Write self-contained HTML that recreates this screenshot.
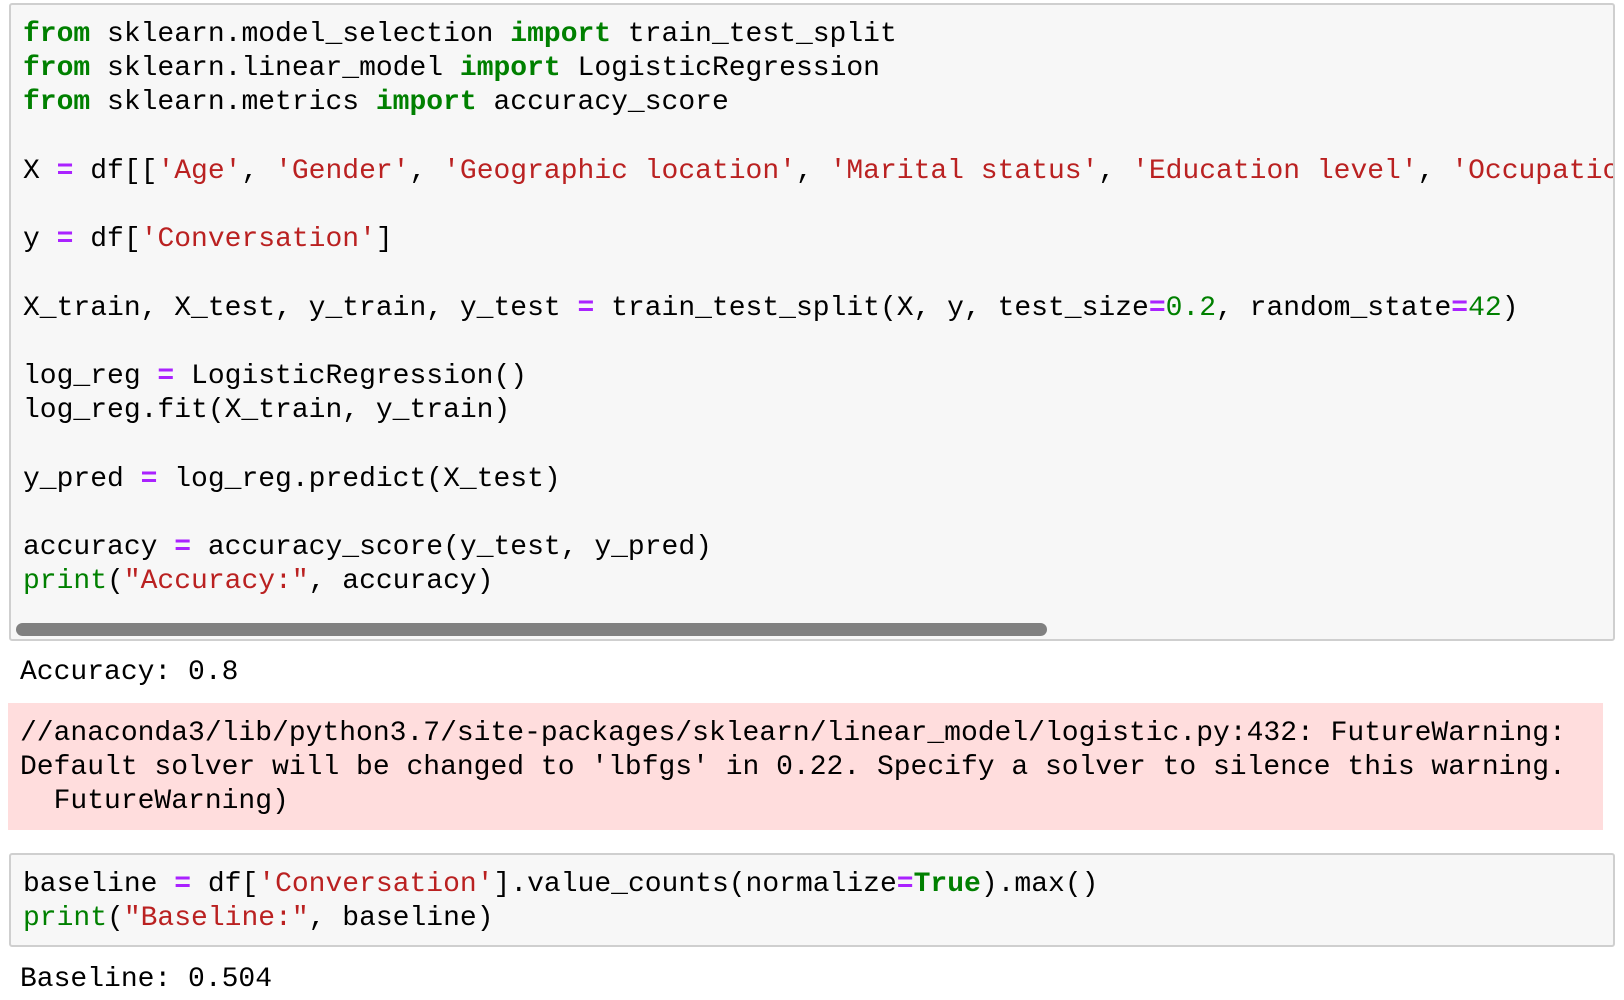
<!DOCTYPE html>
<html><head><meta charset="utf-8"><style>
html,body{margin:0;padding:0;background:#fff;width:1624px;height:1000px;overflow:hidden}
pre{margin:0;font-family:"Liberation Mono","DejaVu Sans Mono",monospace;font-size:28px;line-height:34.2px;color:#000;white-space:pre;position:absolute}
.box{position:absolute;background:#f7f7f7;border:2px solid #cfcfcf;border-radius:3px;box-sizing:border-box;overflow:hidden}
.k{color:#008000;font-weight:bold}
.b{color:#008000}
.s{color:#ba2121}
.o{color:#aa22ff;font-weight:bold}
.n{color:#008000}
</style></head><body>
<div class="box" style="left:9px;top:3px;width:1606px;height:638px">
<pre style="left:12px;top:13px">
<span class="k">from</span> sklearn.model_selection <span class="k">import</span> train_test_split
<span class="k">from</span> sklearn.linear_model <span class="k">import</span> LogisticRegression
<span class="k">from</span> sklearn.metrics <span class="k">import</span> accuracy_score

X <span class="o">=</span> df[[<span class="s">'Age'</span>, <span class="s">'Gender'</span>, <span class="s">'Geographic location'</span>, <span class="s">'Marital status'</span>, <span class="s">'Education level'</span>, <span class="s">'Occupation'</span>]]

y <span class="o">=</span> df[<span class="s">'Conversation'</span>]

X_train, X_test, y_train, y_test <span class="o">=</span> train_test_split(X, y, test_size<span class="o">=</span><span class="n">0.2</span>, random_state<span class="o">=</span><span class="n">42</span>)

log_reg <span class="o">=</span> LogisticRegression()
log_reg.fit(X_train, y_train)

y_pred <span class="o">=</span> log_reg.predict(X_test)

accuracy <span class="o">=</span> accuracy_score(y_test, y_pred)
<span class="b">print</span>(<span class="s">"Accuracy:"</span>, accuracy)</pre>
<div style="position:absolute;left:5px;top:618px;width:1031px;height:13px;background:#808080;border-radius:7px"></div>
</div>
<pre style="left:20px;top:656px">Accuracy: 0.8</pre>
<div style="position:absolute;left:8px;top:703px;width:1595px;height:127px;background:#fdd"></div>
<pre style="left:20px;top:717px">//anaconda3/lib/python3.7/site-packages/sklearn/linear_model/logistic.py:432: FutureWarning:
Default solver will be changed to 'lbfgs' in 0.22. Specify a solver to silence this warning.
  FutureWarning)</pre>
<div class="box" style="left:9px;top:853px;width:1606px;height:94px">
<pre style="left:12px;top:13px">baseline <span class="o">=</span> df[<span class="s">'Conversation'</span>].value_counts(normalize<span class="o">=</span><span class="k">True</span>).max()
<span class="b">print</span>(<span class="s">"Baseline:"</span>, baseline)</pre>
</div>
<pre style="left:20px;top:963px">Baseline: 0.504</pre>
</body></html>
